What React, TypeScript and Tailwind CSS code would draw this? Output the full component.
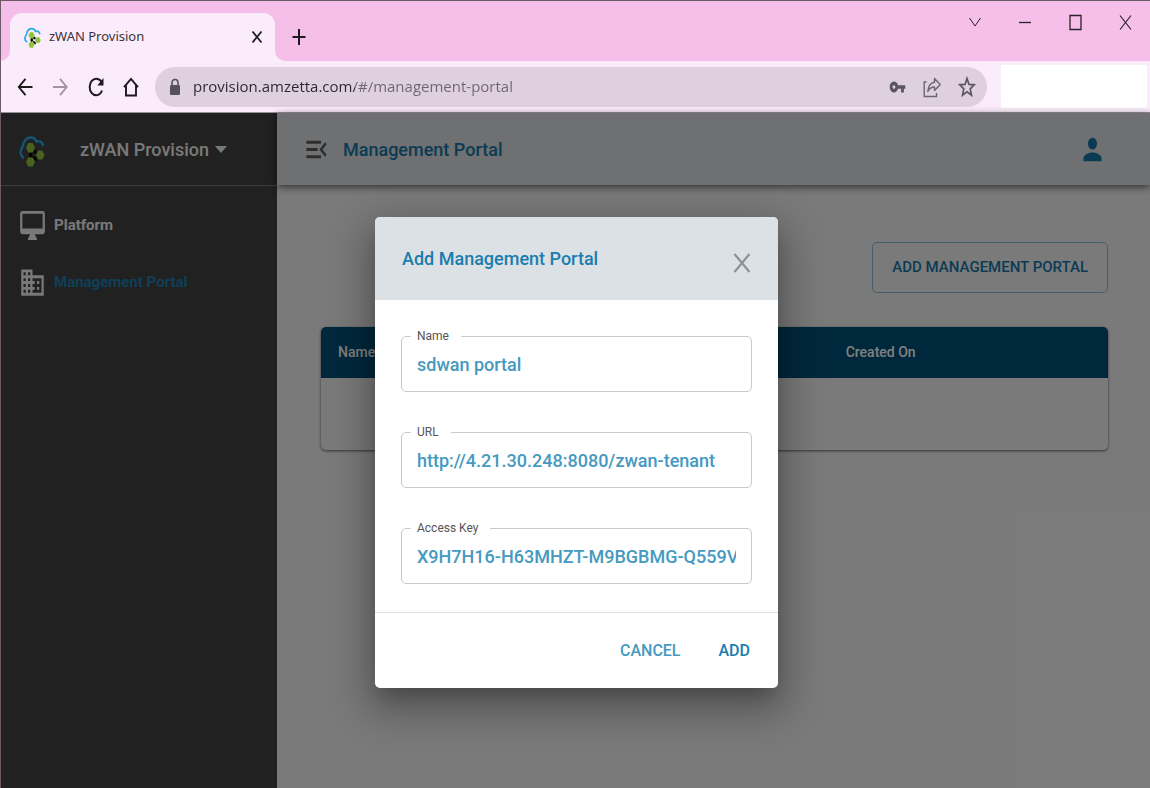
import type { ReactNode } from "react";
import { MdBusiness, MdMenuOpen, MdPerson, MdVpnKey } from "react-icons/md";

function Logo({ className }: { className: string }) {
  return (
    <svg viewBox="0 0 26 32" className={className} preserveAspectRatio="none" aria-hidden="true">
      <path
        d="M4 22.500C1.300 20 .9 16 2.800 13.200c.9-1.300 1-1.800 1.200-2.700C4.800 5.500 8 2.500 11.800 2.500c3 0 4.700 1.400 6 4.200 2.200-1.100 5-.2 6.200 3.300"
        fill="none"
        stroke="#29a8e8"
        strokeWidth="2.500"
        strokeLinecap="round"
      />
      <path d="M11.500 14v12M12 19l5-4M12 20l6 6" fill="none" stroke="#111111" strokeWidth="1.600" />
      <g fill="#8cc63f">
        <path d="M9.200 8h4.600l2.200 4.700-2.200 4.800H9.200L7 12.700z" />
        <path d="M19.200 15.500h4.200l2.200 4.500-2.200 4.500h-4.200L17 20z" />
        <path d="M9.200 22.500h4.600l2.200 4.500-2.200 4.500H9.200L7 27z" />
      </g>
      <path d="M10 18h3.200v3.500H10zM15 15.500h2.500v3H15zM15 22h2.500v3H15z" fill="#000000" />
    </svg>
  );
}

function MonitorIcon({ className }: { className: string }) {
  return (
    <svg viewBox="0 0 24 24" className={className} preserveAspectRatio="none" fill="currentColor" aria-hidden="true">
      <path d="M21 2H3c-1.100 0-2 .9-2 2v12c0 1.100.9 2 2 2h7l-2 3v1h8v-1l-2-3h7c1.100 0 2-.9 2-2V4c0-1.100-.9-2-2-2zm0 12H3V4h18v10z" />
    </svg>
  );
}

function LockIcon({ className }: { className: string }) {
  return (
    <svg viewBox="0 0 12 18" className={className} aria-hidden="true">
      <path d="M3 8V5c0-2 1.200-3.500 3-3.500S9 3 9 5v3" fill="none" stroke="#55505a" strokeWidth="1.600" />
      <rect x="1" y="7" width="10" height="10" rx="1.200" fill="#55505a" />
    </svg>
  );
}

function IconButton({ label, className, children }: { label: string; className?: string; children: ReactNode }) {
  return (
    <button type="button" aria-label={label} className={`flex shrink-0 items-center justify-center ${className ?? ""}`}>
      {children}
    </button>
  );
}

function TabStrip() {
  return (
    <div className="flex h-[60px] items-end bg-[#f6bfe9] pl-[9px]">
      <div className="relative flex h-12 w-[265px] items-center rounded-t-xl bg-[#fbecfb] pr-2.5 pl-3.5">
        <Logo className="h-[21px] w-[17px]" />
        <span className="ml-2 flex-1 text-[13px] text-[#3a3338]">zWAN Provision</span>
        <IconButton label="Close tab" className="size-4">
          <svg viewBox="0 0 16 16" className="size-4" stroke="#1d1a1d" strokeWidth="1.800" fill="none">
            <path d="M3.500 2.500l9 11M12.500 2.500l-9 11" />
          </svg>
        </IconButton>
        <svg viewBox="0 0 10 10" className="absolute bottom-0 -left-2.5 size-2.5" fill="#fbecfb" aria-hidden="true">
          <path d="M10 0v10H0A10 10 0 0 0 10 0z" />
        </svg>
        <svg viewBox="0 0 10 10" className="absolute -right-2.5 bottom-0 size-2.5" fill="#fbecfb" aria-hidden="true">
          <path d="M0 0v10h10A10 10 0 0 1 0 0z" />
        </svg>
      </div>
      <IconButton label="New tab" className="ml-4 h-12 w-4">
        <svg viewBox="0 0 16 18" className="h-[18px] w-4" stroke="#1d1a1d" strokeWidth="2" fill="none">
          <path d="M8 1v16M1.500 9h13" />
        </svg>
      </IconButton>
      <div className="ml-auto flex gap-[30px] self-start pt-[11px] pr-[15px]">
        <IconButton label="Search tabs" className="size-5">
          <svg viewBox="0 0 20 20" className="size-5" stroke="#2b2129" fill="none">
            <path d="M4.500 6l5.500 8 5.500-8" />
          </svg>
        </IconButton>
        <IconButton label="Minimize" className="size-5">
          <svg viewBox="0 0 20 20" className="size-5" stroke="#2b2129" strokeWidth="1.300" fill="none">
            <path d="M4 10.500h12" />
          </svg>
        </IconButton>
        <IconButton label="Maximize" className="size-5">
          <svg viewBox="0 0 20 20" className="size-5" stroke="#2b2129" strokeWidth="1.300" fill="none">
            <path d="M5 3.500h11v14H5z" />
          </svg>
        </IconButton>
        <IconButton label="Close" className="size-5">
          <svg viewBox="0 0 20 20" className="size-5" stroke="#2b2129" strokeWidth="1.200" fill="none">
            <path d="M5 3.500l11 14M16 3.500l-11 14" />
          </svg>
        </IconButton>
      </div>
    </div>
  );
}

function AddressBar() {
  return (
    <div className="flex h-[52px] items-center border-b border-[#9c909b] bg-[#fbecfb] pr-[3px] pl-3.5">
      <div className="flex gap-[15px]">
        <IconButton label="Back" className="size-5">
          <svg viewBox="0 0 20 22" className="h-[22px] w-5" stroke="#1d1a1d" strokeWidth="1.900" fill="none">
            <path d="M17.500 11H4M10.500 2.800L3.800 11l6.700 8.200" />
          </svg>
        </IconButton>
        <IconButton label="Forward" className="size-5">
          <svg viewBox="0 0 20 22" className="h-[22px] w-5" stroke="#a195a1" strokeWidth="1.900" fill="none">
            <path d="M3 11h13.500M10 2.800l6.700 8.200-6.700 8.200" />
          </svg>
        </IconButton>
        <IconButton label="Reload" className="size-5">
          <svg viewBox="0 0 20 22" className="h-[22px] w-5" stroke="#1d1a1d" strokeWidth="2" fill="none">
            <path d="M17 14.500C16 17.400 13.700 19.200 11.200 19.200c-3.700 0-6.500-3.500-6.500-8.200s2.800-8.200 6.500-8.200c2.300 0 4.200 1.200 5.600 3.200" />
            <path d="M18.500 2v7.500h-6.200z" fill="#1d1a1d" stroke="none" />
          </svg>
        </IconButton>
        <IconButton label="Home" className="size-5">
          <svg viewBox="0 0 20 22" className="h-[22px] w-5" stroke="#1d1a1d" strokeWidth="1.900" fill="none">
            <path d="M4 11.200L11 3l7 8.200M6 9.500v10h10v-10" />
          </svg>
        </IconButton>
      </div>
      <div className="ml-[15px] flex h-10 min-w-0 flex-1 items-center rounded-full bg-[#ded0de] pr-2.5 pl-3.5">
        <LockIcon className="h-[18px] w-3 shrink-0" />
        <input
          type="text"
          aria-label="Address"
          defaultValue="provision.amzetta.com/#/management-portal"
          className="ml-3 min-w-0 flex-1 bg-[linear-gradient(90deg,#2b272b_162px,#6e666e_162px)] bg-clip-text font-['Open_Sans',sans-serif] text-[15px] text-transparent outline-none"
        />
        <div className="flex items-center gap-[15px]">
          <IconButton label="Passwords" className="size-5">
            <MdVpnKey className="h-[22px] w-[17px]" color="#5b565d" preserveAspectRatio="none" />
          </IconButton>
          <IconButton label="Share" className="size-5">
            <svg viewBox="0 0 20 22" className="h-[22px] w-5" stroke="#6b656d" strokeWidth="1.400" fill="none">
              <path d="M4.500 6H2.200v14.500h12.300v-3.500" />
              <path d="M12.500 2.500l5.700 6-5.700 6v-3.500c-3 0-5 1.200-6.700 4.500.4-5 2.700-8.800 6.700-9.300z" strokeLinejoin="round" />
            </svg>
          </IconButton>
          <IconButton label="Bookmark" className="size-5">
            <svg viewBox="0 0 20 22" className="h-[22px] w-5" stroke="#5b565d" strokeWidth="1.700" fill="none">
              <path d="M10 2.500l2 5.900 5.200.4-4 4 1.300 6.300L10 15.700l-4.500 3.400 1.300-6.300-4-4 5.200-.4z" />
            </svg>
          </IconButton>
        </div>
      </div>
      <div className="ml-3.5 h-[43px] w-[146px] bg-white" />
    </div>
  );
}

function Sidebar() {
  return (
    <aside className="w-[276px] shrink-0 bg-[#424242] font-medium text-[#f2f2f2]">
      <div className="flex h-[73px] items-center border-b border-[#7a7a7a] pl-[18px]">
        <Logo className="mt-1 h-8 w-[26px]" />
        <button type="button" className="ml-[35px] flex items-center gap-1.5 text-[18px]">
          zWAN Provision
          <svg viewBox="0 0 12 7" className="h-[7px] w-3" fill="currentColor" aria-hidden="true">
            <path d="M0 0h12L6 7z" />
          </svg>
        </button>
      </div>
      <nav className="flex flex-col pt-[11px] text-[15px] font-bold">
        <a href="#/platform" className="flex h-[57px] items-center gap-2 pl-[18px]">
          <MonitorIcon className="h-[35px] w-[27px]" />
          Platform
        </a>
        <a href="#/management-portal" className="flex h-[57px] items-center gap-2 pl-[18px]">
          <MdBusiness className="h-[35px] w-[27px]" preserveAspectRatio="none" aria-hidden="true" />
          <span className="text-[#1f7fb0]">Management Portal</span>
        </a>
      </nav>
    </aside>
  );
}

function PortalPage() {
  return (
    <div className="flex min-w-0 flex-1 flex-col bg-[#f5f5f5]">
      <header className="z-0 flex h-[72px] items-center bg-[#dce1e5] pr-11 pl-[26px] shadow-[0_2px_8px_rgba(0,0,0,0.6)]">
        <IconButton label="Collapse menu">
          <MdMenuOpen className="h-[35px] w-[27px]" color="#5a5a5a" preserveAspectRatio="none" />
        </IconButton>
        <h1 className="ml-[13px] flex-1 text-[18px] font-medium text-[#1777a8]">Management Portal</h1>
        <IconButton label="Account">
          <MdPerson className="h-[35px] w-[27px]" color="#1777a8" preserveAspectRatio="none" />
        </IconButton>
      </header>
      <main className="flex flex-col pt-[57px] pr-[42px] pl-11">
        <button
          type="button"
          className="h-[51px] self-end rounded-[5px] border border-[#8bbbd3] px-[19px] text-[15px] font-medium text-[#1777a8]"
        >
          ADD MANAGEMENT PORTAL
        </button>
        <div className="mt-[34px] overflow-hidden rounded-[5px] shadow-[0_1px_3px_rgba(0,0,0,0.6)]">
          <table className="w-full table-fixed text-left text-[14px]">
            <thead className="bg-[#005078] text-white">
              <tr className="h-[51px]">
                <th className="w-1/3 pl-[17px] font-medium">Name</th>
                <th className="w-1/3 pl-[17px] font-medium">URL</th>
                <th className="w-1/3 font-medium">Created On</th>
              </tr>
            </thead>
            <tbody>
              <tr className="h-[72px]">
                <td colSpan={3} />
              </tr>
            </tbody>
          </table>
        </div>
      </main>
    </div>
  );
}

function Field({ id, label, value }: { id: string; label: string; value: string }) {
  return (
    <fieldset className="h-16 min-w-0 rounded-[5px] border border-[#c9c9c9] px-[15px] pb-2">
      <legend className="-ml-1.5 pr-3 pl-1.5 text-[12px] leading-4 text-[#555555]">
        <label htmlFor={id}>{label}</label>
      </legend>
      <input
        id={id}
        type="text"
        defaultValue={value}
        className="block h-10 w-full bg-transparent text-[18px] font-medium text-[#4699c0] outline-none"
      />
    </fieldset>
  );
}

function AddPortalDialog() {
  return (
    <form
      role="dialog"
      aria-modal="true"
      aria-labelledby="dialog-title"
      className="w-[403px] overflow-hidden rounded-[5px] bg-white shadow-[0_16px_40px_8px_rgba(0,0,0,0.3),0_12px_18px_-6px_rgba(0,0,0,0.2)]"
    >
      <div className="flex h-[83px] items-center justify-between bg-[#dce1e5] px-[27px]">
        <h2 id="dialog-title" className="text-[18px] font-medium text-[#1a7dae]">
          Add Management Portal
        </h2>
        <IconButton label="Close dialog" className="mt-2">
          <svg viewBox="0 0 18 22" className="h-[22px] w-[18px]" stroke="#8f9294" strokeWidth="2.200" fill="none">
            <path d="M1.500 2l15 18M16.500 2L1.500 20" />
          </svg>
        </IconButton>
      </div>
      <div className="flex flex-col gap-8 px-[26px] pt-7 pb-7">
        <Field id="portal-name" label="Name" value="sdwan portal" />
        <Field id="portal-url" label="URL" value="http://4.21.30.248:8080/zwan-tenant" />
        <Field id="portal-key" label="Access Key" value="X9H7H16-H63MHZT-M9BGBMG-Q559VQ2" />
      </div>
      <div className="flex h-[76px] items-center justify-end gap-[38px] border-t border-[#dddddd] pr-7 text-[16px] font-medium">
        <button type="button" className="text-[#4699c0]">
          CANCEL
        </button>
        <button type="submit" className="text-[#1a7dae]">
          ADD
        </button>
      </div>
    </form>
  );
}

export default function App() {
  return (
    <div className="flex min-h-screen flex-col border-t border-l border-[#6b5b68] font-['Noto_Sans',sans-serif]">
      <TabStrip />
      <AddressBar />
      <div className="relative flex flex-1 font-[Roboto,sans-serif]">
        <Sidebar />
        <PortalPage />
        <div className="absolute inset-0 z-10 flex items-center justify-center overflow-hidden bg-black/50 pt-1 pl-0.5">
          <AddPortalDialog />
        </div>
      </div>
    </div>
  );
}
